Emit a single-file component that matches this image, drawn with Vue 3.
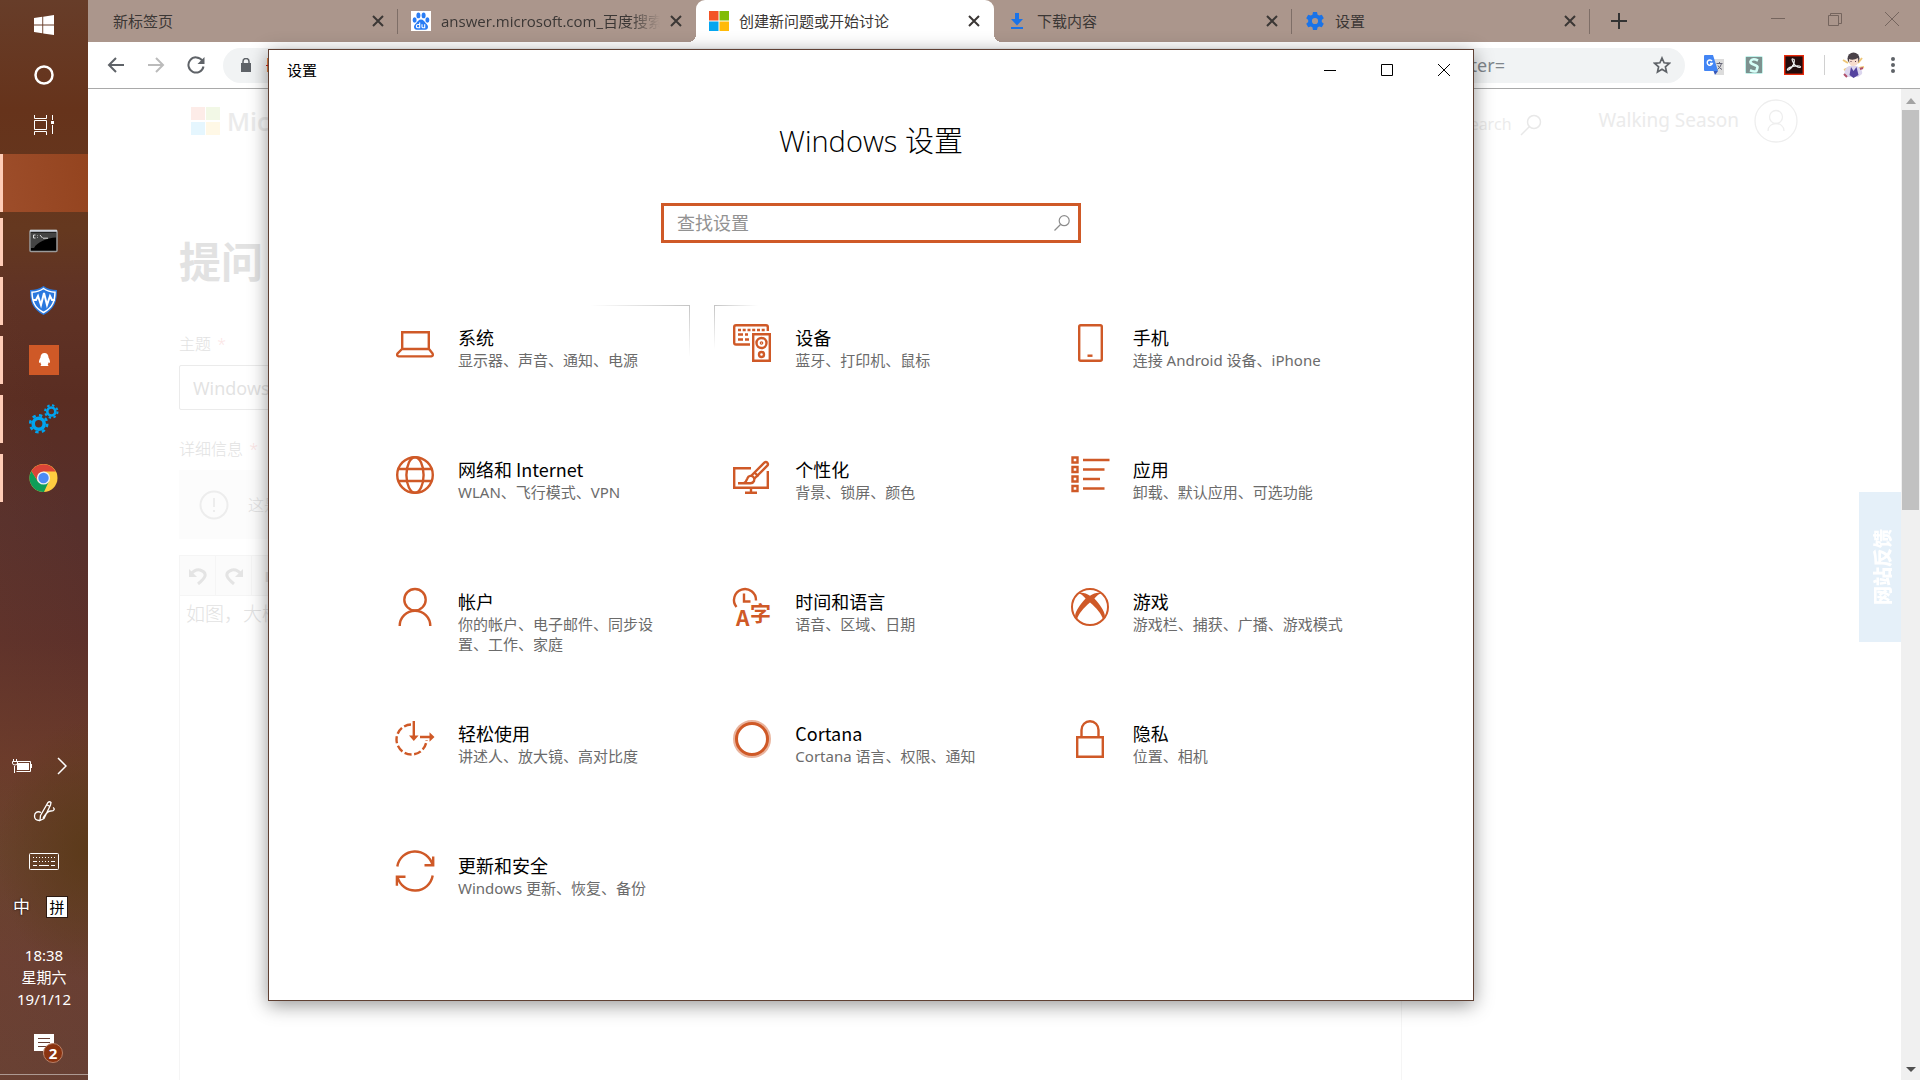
<script setup>
import { ref } from 'vue'

const query = ref('')
const subject = ref('Windows')

const tabs = [
  { title: '新标签页', icon: '' },
  { title: 'answer.microsoft.com_百度搜索', icon: 'baidu', fade: true },
  { title: '创建新问题或开始讨论', icon: 'ms', active: true },
  { title: '下载内容', icon: 'download' },
  { title: '设置', icon: 'gear' },
]

const favicons = {
  baidu:
    '<rect width="20" height="20" fill="#fff"/><g fill="#2a7df4"><ellipse cx="3.6" cy="9" rx="2" ry="2.7"/><ellipse cx="7.4" cy="4.4" rx="2" ry="2.9"/><ellipse cx="12.6" cy="4.4" rx="2" ry="2.9"/><ellipse cx="16.4" cy="9" rx="2" ry="2.7"/><path d="M10 8.600c2.400 0 3.200 2 4.800 3.600 2 1.800 2.600 3 2 4.800-.8 2.200-3 1.800-6.800 1.800s-6 .4-6.800-1.800c-.6-1.800 0-3 2-4.800C6.800 10.600 7.600 8.600 10 8.600z"/></g><path d="M8.700 11.500v5.300H7a1.500 1.500 0 0 1 0-3.300h1.700M11 13.300v2.400q0 1 1 1h1.700v-3.400" fill="none" stroke="#fff" stroke-width="1.100"/>',
  ms: '<path fill="#f35325" d="M0 0h9.500v9.500H0z"/><path fill="#81bc06" d="M10.500 0H20v9.500h-9.500z"/><path fill="#05a6f0" d="M0 10.500h9.500V20H0z"/><path fill="#ffba08" d="M10.500 10.500H20V20h-9.500z"/>',
  download: '<path fill="#1a73e8" d="M8 2h4v6h4l-6 6.500L4 8h4zM4 16h12v2H4z"/>',
  gear: '<path fill="#1a73e8" fill-rule="evenodd" d="M8 1h4l.6 2.700 1.600.9 2.600-.8 2 3.400-2 1.900v1.800l2 1.900-2 3.400-2.600-.8-1.600.9L12 19H8l-.6-2.700-1.600-.9-2.600.8-2-3.400 2-1.900V9.100l-2-1.900 2-3.400 2.600.8 1.600-.9zM10 6.900a3.100 3.100 0 1 0 0 6.200 3.100 3.100 0 0 0 0-6.200z"/>',
}

const tiles = [
  {
    title: '系统',
    text: '显示器、声音、通知、电源',
    edge: 'end',
    icon: '<path d="M6.200 25V8.200h26.600V25zM6 25l-4.600 4.600q-.9 2.600 1.300 2.800h32.600q2.200-.2 1.300-2.800L33 25"/>',
  },
  {
    title: '设备',
    text: '蓝牙、打印机、鼠标',
    edge: 'start',
    icon: '<path d="M17 20.500H3q-1.800 0-1.800-1.800V3q0-1.800 1.800-1.800h30q1.800 0 1.800 1.800v4"/><path d="M5 6h3M9.700 6h3M14.500 6h3M19.200 6h3M24 6h3M28.700 6h3M5 10.500h5M12 10.500h3M5 15.500h5M12 15.500h4"/><path d="M20.200 10.200h16.600v26.600H20.200z"/><circle cx="28.500" cy="19" r="5"/><circle cx="28.500" cy="19" r=".6"/><circle cx="28.500" cy="30.500" r="2.500"/>',
  },
  {
    title: '手机',
    text: '连接 Android 设备、iPhone',
    icon: '<rect x="8.200" y="1.200" width="22.600" height="35.600" rx="1.500"/><path d="M16.500 31.700h5"/>',
  },
  {
    title: '网络和 Internet',
    text: 'WLAN、飞行模式、VPN',
    icon: '<circle cx="19" cy="19" r="17.800"/><ellipse cx="19" cy="19" rx="8.600" ry="17.800"/><path d="M2.500 13h33M2.500 25h33"/>',
  },
  {
    title: '个性化',
    text: '背景、锁屏、颜色',
    icon: '<path d="M18 12.200H1.200v19.600h33.600V15M18 32v5M12 36.800h12"/><path d="M5 27.200h12.500c3.400 0 4.800-3.600 3.200-5.800-1.600-2.400-5.400-1.800-6.300.9-.8 2.200-1.400 3.800-3.400 4.800"/><path d="M18.500 19.500L31.300 6.700q1.600-1.400 3 0 1.300 1.400 0 3L21.500 22.500M21.500 16.500l4 4"/>',
  },
  {
    title: '应用',
    text: '卸载、默认应用、可选功能',
    icon: '<path d="M1.500 1.500h5v5h-5zM1.500 11h5v5h-5zM1.500 20.500h5v5h-5zM1.500 30h5v5h-5z"/><path d="M12 4h26.500M12 13.500h21.500M12 23h17M12 32.500h21.500"/>',
  },
  {
    title: '帐户',
    text: '你的帐户、电子邮件、同步设置、工作、家庭',
    icon: '<circle cx="19" cy="11.700" r="10.700"/><path d="M3.700 38a15.300 15.300 0 0 1 30.600 0"/>',
  },
  {
    title: '时间和语言',
    text: '语音、区域、日期',
    icon: '<path d="M3.500 19A11 11 0 1 1 23 12.500M11 5.500v8h6.500"/><g fill="#cf5927" stroke="none" font-weight="700"><text x="3" y="38" font-size="21" font-family="Noto Sans CJK SC, sans-serif">A</text><text x="17" y="33" font-size="21" font-family="Noto Sans CJK SC, sans-serif">字</text></g>',
  },
  {
    title: '游戏',
    text: '游戏栏、捕获、广播、游戏模式',
    icon: '<circle cx="19" cy="19" r="18" stroke-width="2"/><path fill="#cf5927" stroke="none" d="M7 5.200c4-1.200 8-.2 12 2.500 4-2.700 8-3.700 12-2.500-2.600.2-5 2-7.600 5.400 5.600 6 9.800 12.400 10.400 16.400.2 1.800-.6 3-1.800 4.200C30.500 26 25.500 20 19 14.500 12.500 20 7.500 26 6 31.200 4.800 30 4 28.800 4.200 27c.6-4 4.800-10.400 10.400-16.400C12 7.200 9.600 5.400 7 5.200z"/>',
  },
  {
    title: '轻松使用',
    text: '讲述人、放大镜、高对比度',
    icon: '<path stroke-dasharray="7.200 2.600" d="M15 4.500A15 15 0 1 0 30.500 20"/><path d="M17.800 1v16M24 17h10"/><path fill="#cf5927" stroke="none" d="M13 15.500h9.600L17.800 21zM33.500 12.300v9.400L38.500 17z"/>',
  },
  {
    title: 'Cortana',
    text: 'Cortana 语言、权限、通知',
    icon: '<circle cx="19" cy="19" r="17.500" stroke-width="3" opacity=".45"/><circle cx="19" cy="19" r="15.500" stroke-width="3"/>',
  },
  {
    title: '隐私',
    text: '位置、相机',
    icon: '<path d="M6.200 17.200h25.600v19.600H6.200zM10.500 17v-7a8.500 8.800 0 0 1 17 0v7"/>',
  },
  {
    title: '更新和安全',
    text: 'Windows 更新、恢复、备份',
    icon: '<path d="M1.300 14.500A18 18 0 0 1 36.500 13M36.700 23.500A18 18 0 0 1 1.500 25M28.500 13.200h8.700V4.500M9.500 24.800H.9v9"/>',
  },
]

const running = [
  {
    name: '命令提示符',
    icon: '<rect x="1" y="3.500" width="27" height="21" rx="1" fill="#000" stroke="#9a9a9a" stroke-width="1.500"/><path d="M2 5.500h25v5C18 11 8 15 5 21H2z" fill="#444"/><path d="M1 3.800h27" stroke="#cfd3dc" stroke-width="2"/><path d="M6.500 8h-2v3h2M8.500 8.500v.6M8.500 10.400v.6M11 8l2.500 3M14 11.200h5" stroke="#ddd" fill="none"/>',
  },
  {
    name: '安全卫士',
    icon: '<path d="M14.500 0C11 2.800 6 4 1 4c0 11 2 19 13.500 25C26 23 28 15 28 4c-5 0-10-1.200-13.500-4z" fill="#2a78de"/><path d="M14.500 2.500C11 5 7 6 3 6.200 3.300 15 5 21.500 14.500 26.500 24 21.500 25.700 15 26 6.200 22 6 18 5 14.500 2.500z" fill="none" stroke="#fff" stroke-width="1.500"/><path d="M4 14h3l2-4 3 9 3-12 3 12 3-9 2 4h3" fill="none" stroke="#fff" stroke-width="2"/>',
  },
  {
    name: 'QQ',
    icon: '<path d="M0 0h30v30H0z" fill="#cf5927"/><path d="M15.500 8c-2.500 0-4 1.800-4 4.500-1.200 2.200-1.700 3.700-1.500 5.500l1.300-.8q.3 1.400 1 2.100l-.8 1.700h8l-.8-1.700q.7-.7 1-2.100l1.300.8c.2-1.800-.3-3.300-1.500-5.500 0-2.700-1.500-4.500-4-4.500z" fill="#fff"/>',
  },
  {
    name: '服务',
    icon: '<g fill="none" stroke="#00a4ef"><circle cx="9.700" cy="19.800" r="5.500" stroke-width="3.600"/><circle cx="9.700" cy="19.800" r="8.500" stroke-width="2.600" stroke-dasharray="3.340 3.340"/><circle cx="22.300" cy="7.500" r="4" stroke-width="2.600"/><circle cx="22.300" cy="7.500" r="6.200" stroke-width="2" stroke-dasharray="2.430 2.430"/></g>',
  },
  {
    name: 'Chrome',
    icon: '<circle cx="14.500" cy="15" r="14" fill="#ffcd40"/><path d="M2.400 8A14 14 0 0 0 15 29l5-11-11 .5z" fill="#0f9d58"/><path d="M2.400 8L9 18.500l5.500-10H26.700A14 14 0 0 0 2.400 8z" fill="#db4437"/><circle cx="14.500" cy="15" r="6.600" fill="#f1f1f1"/><circle cx="14.500" cy="15" r="5.200" fill="#4c8bf5"/>',
  },
]
</script>

<template>
  <div class="desktop" lang="zh-CN">
    <nav class="taskbar" aria-label="任务栏">
      <button class="task" aria-label="开始">
        <svg width="20" height="20" fill="#fff"><path d="M0 3l8.300-1.200v7.700H0zM9.200 1.700L20 0v9.500H9.200zM0 10.400h8.300v7.800L0 17zM9.200 10.400H20V20l-10.800-1.600z" /></svg>
      </button>
      <button class="task" aria-label="Cortana">
        <svg width="20" height="20" fill="none"><circle cx="10" cy="10" r="8.500" stroke="#fff" stroke-width="2.500" /></svg>
      </button>
      <button class="task" aria-label="任务视图">
        <svg width="20" height="20" fill="none" stroke="#fff"><path d="M.5 0v3.500h12V0M.5 5.500h12v9H.5zM.5 20v-3.500h12V20M18.500 0v5M18.500 10v9" /><path d="M17 6h3v3h-3z" fill="#fff" stroke="none" /></svg>
      </button>
      <button class="task current" aria-label="设置"></button>
      <button v-for="app in running" :key="app.name" class="task running" :aria-label="app.name">
        <svg width="30" height="30" v-html="app.icon"></svg>
      </button>

      <div class="tray">
        <div class="pair">
          <svg width="20" height="14" fill="none" stroke="#fff"><path d="M5 2.500h13.500v10H4.500" /><path d="M5 4h12v7H5z" fill="#fff" stroke="none" /><path d="M19.500 5v4M2.500 7v7M1.500 0v2M4.500 0v2M.5 2.500h5v1.500q0 2-2.500 2T.5 4z" /></svg>
          <svg width="10" height="18" fill="none" stroke="#fff" stroke-width="1.500"><path d="M1 1l8 8-8 8" /></svg>
        </div>
        <svg class="pen" width="22" height="22" fill="none" stroke="#fff" stroke-width="1.300"><path d="M8 12.500c-4-2-6.500.5-6.500 3.500s2 4.500 5 4.500M7.500 15.500L15 2.500q1.500-1.500 3 0l-.5 2.500L11 18.500 7 20.500zM10 18c3-4 4-7 8-7 3.500 0 4-2.500 2-3.500M13.500 4.500l3 1.700" /></svg>
        <svg class="keys" width="30" height="18" fill="none" stroke="#fff"><rect x=".5" y=".5" width="29" height="16" rx="1" /><path d="M4 4.500h22" stroke-dasharray="1 2" /><path d="M4 8.500h4M10 8.500h1M13 8.500h1M16 8.500h1M19 8.500h1M22 8.500h4M4 12.500h4M10 12.500h10M22 12.500h4" /></svg>
        <div class="pair ime">
          <span class="zhong">中</span>
          <span class="pin">拼</span>
        </div>
        <div class="clock">18:38<br />星期六<br />19/1/12</div>
        <button class="notice" aria-label="通知">
          <svg width="20" height="22"><path d="M0 0h20v17h-7l-4 4v-4H0z" fill="#fff" /><path d="M4 4.500h12M4 8.500h12M4 12.500h8" stroke="#683f34" /></svg>
          <span class="count">2</span>
        </button>
      </div>
    </nav>

    <section class="browser">
      <header class="strip">
        <div class="tabs">
          <div v-for="tab in tabs" :key="tab.title" class="tab" :class="{ active: tab.active }">
            <svg v-if="tab.icon" width="20" height="20" v-html="favicons[tab.icon]"></svg>
            <span class="label" :class="{ fade: tab.fade }">{{ tab.title }}</span>
            <button class="close" aria-label="关闭标签页">
              <svg width="12" height="12" stroke="#3b3735" stroke-width="2"><path d="M1 1l10 10M11 1L1 11" /></svg>
            </button>
          </div>
          <button class="plus" aria-label="新标签页">
            <svg width="16" height="16" stroke="#333" stroke-width="2"><path d="M8 0v16M0 8h16" /></svg>
          </button>
        </div>
        <div class="controls dim">
          <button aria-label="最小化"><svg width="14" height="14" stroke="#75655e"><path d="M0 6.500h14" /></svg></button>
          <button aria-label="还原"><svg width="14" height="14" fill="none" stroke="#75655e"><path d="M.5 3.500h10v10H.5zM2.500 3.500v-2h11v10h-3" /></svg></button>
          <button aria-label="关闭"><svg width="14" height="14" stroke="#75655e"><path d="M0 0l14 14M14 0L0 14" /></svg></button>
        </div>
      </header>

      <div class="toolbar">
        <button class="nav" aria-label="后退"><svg width="18" height="16" fill="none" stroke="#5f6368" stroke-width="2"><path d="M17 8H2M9 1L2 8l7 7" /></svg></button>
        <button class="nav" aria-label="前进"><svg width="18" height="16" fill="none" stroke="#bbb" stroke-width="2"><path d="M1 8h15M9 1l7 7-7 7" /></svg></button>
        <button class="nav" aria-label="刷新"><svg width="18" height="18" fill="none" stroke="#5f6368" stroke-width="2"><path d="M15.200 4.500A7.600 7.600 0 1 0 16.500 10.500" /><path d="M17.500 1v7h-7z" fill="#5f6368" stroke="none" /></svg></button>
        <div class="omnibox">
          <svg width="10" height="14"><path d="M0 5h10v9H0z" fill="#5f6368" /><path d="M2 5.500V3.500a3 3 0 0 1 6 0v2" fill="none" stroke="#5f6368" stroke-width="1.500" /></svg>
          <s class="scheme">h</s>
          <span class="url">ter=</span>
          <svg class="star" width="18" height="18" viewBox="0 0 18 18" fill="none" stroke="#5f6368" stroke-width="1.700"><path d="M9 2l2.100 4.800 5.200.5-3.900 3.500 1.100 5.100L9 13.200l-4.500 2.700 1.100-5.100L1.700 7.300l5.200-.5z" /></svg>
        </div>
        <div class="extensions">
          <svg width="20" height="20"><path d="M8 4h12v16H12z" fill="#dcdcdc" /><path d="M0 1q0-1 1-1h8l5 16H1q-1 0-1-1z" fill="#4285f4" /><path d="M9.500 16H14l-3 4z" fill="#3556b8" /><path d="M8 6.200A2.600 2.600 0 1 0 8.300 8.500H6" fill="none" stroke="#fff" stroke-width="1.400" /><path d="M12.500 8.500h6M15.500 7v1.500M17.500 8.500q-1 4-4 6M14 10.500q1 2.500 4 4" fill="none" stroke="#667" /></svg>
          <svg width="20" height="20"><rect x="1" y="1" width="18" height="18" rx="2" fill="#bdf0e8" /><rect x="2" y="2" width="16" height="16" fill="#7d918f" /><path d="M14 5.500Q9 3 7 5.500t2.500 4 4 3-1 3.300-6.500-.6" fill="none" stroke="#d6fff8" stroke-width="2.600" /></svg>
          <svg width="20" height="20"><rect x=".7" y=".7" width="18.600" height="18.600" fill="#230b0b" stroke="#e8290b" stroke-width="1.400" /><path d="M9 4q2 0 1 4t-5.500 7q-2 .5-.5-1.500 4-3 11.500-2.500 2 1 .3 1.500Q12 12.500 9.500 8T9 4z" fill="none" stroke="#eee" stroke-width="1.200" /></svg>
        </div>
        <svg class="avatar" width="26" height="26" viewBox="0 0 26 26"><path d="M3 8l5 3M22 6l-4 5M4 18l5-2M24 15l-5 1" stroke="#efc778" stroke-width="2" /><path d="M5 23q-2-6 4-9h8q6 3 5 8l-4 3H8z" fill="#dcd6ee" /><path d="M11 15l2.500 4 3-4 2 8-5 3-4-3z" fill="#54439f" /><path d="M4 22l3 3M20 17l3-1" stroke="#b04f6b" stroke-width="2" /><circle cx="13.500" cy="6.500" r="6" fill="#4a4148" /><path d="M9 7q4 2 9-1 1.500 7-4 8T9 7z" fill="#f6dccd" /><path d="M10.500 9.500h1M15 9.500h1" stroke="#5b3a4a" /></svg>
        <button class="more" aria-label="菜单"><svg width="4" height="16" fill="#5f6368"><circle cx="2" cy="2" r="2" /><circle cx="2" cy="8" r="2" /><circle cx="2" cy="14" r="2" /></svg></button>
      </div>

      <div class="viewport">
        <main class="page">
          <div class="site">
            <svg class="logo" width="29" height="28"><path fill="#fdece8" d="M0 0h14v13H0z" /><path fill="#f2f8e6" d="M15 0h14v13H15z" /><path fill="#e5f6fe" d="M0 15h14v13H0z" /><path fill="#fff8e6" d="M15 15h14v13H15z" /></svg>
            <span class="brand">Micr</span>
            <span class="search">earch</span>
            <svg class="lens" width="22" height="22" fill="none" stroke="#e8e8e8" stroke-width="1.500"><circle cx="14" cy="8" r="6.500" /><path d="M9.500 12.500L1 21" /></svg>
            <span class="user">Walking Season</span>
            <svg width="44" height="44" fill="none" stroke="#eee" stroke-width="1.300"><circle cx="22" cy="22" r="21" /><circle cx="22" cy="18" r="6.500" /><path d="M14 32c0-10 16-10 16 0" /></svg>
          </div>

          <form class="ask" @submit.prevent>
            <h1>提问</h1>
            <label for="subject">主题 <i>*</i></label>
            <input id="subject" v-model="subject" type="text" />
            <label for="details">详细信息 <i>*</i></label>
            <div class="alert">
              <svg width="30" height="30" fill="none" stroke="#ededed" stroke-width="2"><circle cx="15" cy="15" r="13.500" /><path d="M15 8v9M15 20v2" /></svg>
              <span>这是</span>
            </div>
            <div class="editor">
              <div class="tools">
                <button type="button" aria-label="撤消"><svg width="20" height="18" fill="none" stroke="#e4e4e4" stroke-width="3"><path d="M3 7q4-5 9-4 6 2 5 6-1 3-7 8" /><path d="M1 2v8h8z" fill="#e4e4e4" stroke="none" /></svg></button>
                <button type="button" aria-label="恢复"><svg width="20" height="18" fill="none" stroke="#e4e4e4" stroke-width="3"><path d="M17 7q-4-5-9-4-6 2-5 6 1 3 7 8" /><path d="M19 2v8h-8z" fill="#e4e4e4" stroke="none" /></svg></button>
                <button type="button" aria-label="粗体"><b>B</b></button>
              </div>
              <textarea id="details">如图，大概</textarea>
            </div>
          </form>
          <a class="feedback" href="#feedback"><span>网站反馈</span></a>
        </main>
        <div class="scrollbar" aria-hidden="true">
          <svg width="10" height="6"><path d="M0 6l5-6 5 6z" fill="#a3a3a3" /></svg>
          <div class="thumb"></div>
          <svg class="down" width="10" height="6"><path d="M0 0h10L5 5z" fill="#505050" /></svg>
        </div>
      </div>
    </section>

    <section class="settings" aria-label="设置">
      <header class="titlebar">
        <span>设置</span>
        <div class="controls">
          <button aria-label="最小化"><svg width="12" height="12" stroke="#000"><path d="M0 6.500h12" /></svg></button>
          <button aria-label="最大化"><svg width="12" height="12" fill="none" stroke="#000"><path d="M.5.5h11v11H.5z" /></svg></button>
          <button aria-label="关闭"><svg width="12" height="12" stroke="#000"><path d="M0 0l12 12M12 0L0 12" /></svg></button>
        </div>
      </header>
      <h2>Windows 设置</h2>
      <div class="find">
        <input v-model="query" type="text" placeholder="查找设置" aria-label="查找设置" />
        <svg width="16" height="16" fill="none" stroke="#8c8c8c" stroke-width="1.200"><circle cx="10.200" cy="5.700" r="5" /><path d="M6.500 9.500L.5 15.500" /></svg>
      </div>
      <div class="grid">
        <a v-for="tile in tiles" :key="tile.title" class="tile" :class="tile.edge" href="#settings">
          <svg width="38" height="38" viewBox="0 0 38 38" fill="none" stroke="#cf5927" stroke-width="2.400" overflow="visible" v-html="tile.icon"></svg>
          <span class="words">
            <strong>{{ tile.title }}</strong>
            <small>{{ tile.text }}</small>
          </span>
        </a>
      </div>
    </section>
  </div>
</template>

<style>
html,
body {
  margin: 0;
  overflow: hidden;
}
</style>

<style scoped>
.desktop {
  position: relative;
  display: flex;
  height: 100vh;
  overflow: hidden;
  font-family: "Open Sans", "Noto Sans CJK SC", sans-serif;
  font-size: 15px;
  line-height: 20px;
  color: #000;
}
.desktop * {
  box-sizing: border-box;
}
button {
  margin: 0;
  padding: 0;
  border: 0;
  background: none;
  font: inherit;
  color: inherit;
  display: flex;
  align-items: center;
  justify-content: center;
}
svg {
  display: block;
  flex: none;
}

/* Taskbar */
.taskbar {
  flex: none;
  width: 88px;
  display: flex;
  flex-direction: column;
  background:
    radial-gradient(90px 130px at 88px 850px, #5c3a1a, transparent),
    linear-gradient(75deg, rgba(125, 75, 50, 0.25), transparent 60%),
    linear-gradient(#673d29 0, #66331b 110px, #65381f 230px, #603325 290px, #5a2d22 400px, #57302c 520px, #5c302a 640px, #69392a 760px, #64402b 850px, #673d33 960px, #633e34 1080px);
}
.task {
  flex: none;
  height: 50px;
}
.current {
  height: 58px;
  margin: 4px 0 1px;
  background: linear-gradient(80deg, #9d4d2a, #94441f);
  border-left: 3px solid #ffcdb7;
}
.running {
  height: 48px;
  margin: 5px 0 6px;
  padding-right: 3px;
  border-left: 3px solid #ffcdb7;
}
.tray {
  margin-top: auto;
  display: flex;
  flex-direction: column;
  align-items: center;
  color: #fff;
  border-bottom: 1px solid #ad9992;
  margin-bottom: 5px;
}
.pair {
  width: 88px;
  padding: 0 21px 0 12px;
  display: flex;
  align-items: center;
  justify-content: space-between;
}
.pen {
  margin-top: 25px;
}
.keys {
  margin-top: 31px;
}
.ime {
  margin-top: 26px;
  padding-left: 13px;
  font-size: 17px;
}
.zhong {
  text-shadow: 0 0 2px #000;
}
.pin {
  width: 20px;
  background: #fff;
  color: #000;
  font-size: 15px;
  line-height: 20px;
  text-align: center;
  outline: 1px solid #2d1a12;
}
.clock {
  margin-top: 27px;
  text-align: center;
  font-family: "Noto Sans", "Noto Sans CJK SC", sans-serif;
  line-height: 22px;
}
.notice {
  position: relative;
  margin: 24px 0 18px;
}
.count {
  position: absolute;
  left: 9px;
  top: 9px;
  width: 20px;
  height: 20px;
  border: 1px solid #b98067;
  border-radius: 50%;
  background: #8b3310;
  font-weight: 700;
  line-height: 18px;
}

/* Browser */
.browser {
  flex: 1;
  min-width: 0;
  display: flex;
  flex-direction: column;
  background: #fff;
}
.strip {
  flex: none;
  height: 42px;
  display: flex;
  justify-content: space-between;
  background: #ab968c;
}
.tabs {
  flex: 1;
  min-width: 0;
  display: flex;
  padding-left: 12px;
}
.tab {
  position: relative;
  flex: 0 1 298px;
  min-width: 0;
  display: flex;
  align-items: center;
  gap: 10px;
  padding: 0 14px 0 13px;
  color: #3b3735;
}
.tab:not(.active)::after {
  content: "";
  position: absolute;
  right: 0;
  top: 9px;
  height: 25px;
  border-right: 1px solid #7e6e67;
}
.tab:nth-child(2)::after {
  display: none;
}
.active {
  background: #fff;
  border-radius: 9px 9px 0 0;
}
.active::before,
.active::after {
  content: "";
  position: absolute;
  bottom: 0;
  width: 8px;
  height: 8px;
}
.active::before {
  left: -8px;
  background: radial-gradient(circle at 0 0, transparent 8px, #fff 8px);
}
.active::after {
  right: -8px;
  background: radial-gradient(circle at 100% 0, transparent 8px, #fff 8px);
}
.label {
  flex: 1;
  overflow: hidden;
  white-space: nowrap;
}
.fade {
  mask-image: linear-gradient(90deg, #000 86%, transparent);
}
.plus {
  width: 58px;
}
.controls {
  display: flex;
}
.controls button {
  width: 57px;
}
.dim button {
  height: 37px;
}
.toolbar {
  flex: none;
  height: 47px;
  display: flex;
  align-items: center;
  padding: 0 13px 0 8px;
  border-bottom: 1px solid #a9a9a9;
}
.nav {
  width: 40px;
  height: 40px;
}
.omnibox {
  flex: 1;
  min-width: 0;
  height: 35px;
  margin: 0 19px 0 7px;
  padding: 0 14px 0 18px;
  display: flex;
  align-items: center;
  border-radius: 18px;
  background: #f1f3f4;
  font-family: "Noto Sans", "Noto Sans CJK SC", sans-serif;
  font-size: 18px;
  color: #80868b;
}
.scheme {
  margin-left: 15px;
  color: #c5221f;
}
.url {
  margin-left: auto;
}
.star {
  margin-left: 148px;
}
.extensions {
  display: flex;
  gap: 20px;
  padding-right: 20px;
  border-right: 1px solid #d0d0d0;
}
.avatar {
  margin: 0 13px 0 15px;
}
.more {
  width: 28px;
  height: 28px;
}
.viewport {
  flex: 1;
  min-height: 0;
  display: flex;
}

/* Page */
.page {
  position: relative;
  flex: 1;
  min-width: 0;
  display: flex;
  flex-direction: column;
  overflow: hidden;
}
.site {
  flex: none;
  height: 64px;
  display: flex;
  align-items: center;
  padding: 0 103px;
  color: #ebebeb;
}
.brand {
  margin-left: 7px;
  font-size: 25px;
  font-weight: 600;
}
.search {
  margin: 6px 8px 0 auto;
  font-size: 16px;
}
.lens {
  margin: 8px 57px 0 0;
}
.user {
  margin: 0 15px 2px 0;
  font-family: "Noto Sans", "Noto Sans CJK SC", sans-serif;
  font-size: 19px;
}
.ask {
  flex: 1;
  display: flex;
  flex-direction: column;
  max-width: 1223px;
  margin: 0 20px 0 91px;
  color: #e2e2e2;
}
.ask h1 {
  margin: 79px 0 40px;
  font-size: 42px;
  line-height: 60px;
  font-weight: 700;
}
.ask label {
  font-size: 16px;
  font-weight: 300;
  line-height: 24px;
}
.ask label i {
  margin-left: 2px;
  color: #fbe4e4;
  font-style: normal;
}
.ask input {
  height: 45px;
  margin: 9px 0 27px;
  padding: 0 13px;
  border: 1px solid #ebebeb;
  border-radius: 2px;
  font: inherit;
  font-size: 18px;
  color: inherit;
}
.alert {
  height: 69px;
  margin: 9px 0 16px;
  padding: 0 20px;
  display: flex;
  align-items: center;
  gap: 19px;
  background: #fcfcfc;
  font-size: 16px;
  font-weight: 300;
}
.editor {
  flex: 1;
  display: flex;
  flex-direction: column;
  border: 1px solid #f5f5f5;
  border-bottom: 0;
}
.tools {
  display: flex;
  height: 40px;
  background: #fbfbfb;
  border-bottom: 1px solid #f5f5f5;
}
.tools button {
  width: 36px;
  border-right: 1px solid #f5f5f5;
}
.editor textarea {
  flex: 1;
  padding: 4px 6px;
  border: 0;
  resize: none;
  font: inherit;
  font-size: 19px;
  font-weight: 300;
  line-height: 28px;
  color: inherit;
  background: none;
}
.feedback {
  position: absolute;
  right: 0;
  top: 403px;
  width: 42px;
  height: 150px;
  display: flex;
  align-items: center;
  justify-content: center;
  padding-left: 5px;
  background: #e5f0f9;
  color: #fff;
  font-size: 19px;
  font-weight: 900;
  text-decoration: none;
}
.feedback span {
  writing-mode: vertical-rl;
  text-orientation: sideways;
  transform: rotate(180deg);
}
.scrollbar {
  flex: none;
  width: 19px;
  display: flex;
  flex-direction: column;
  align-items: center;
  padding: 9px 1px 7px;
  background: #f0f0f0;
}
.thumb {
  width: 17px;
  height: 41%;
  margin-top: 6px;
  background: #c1c1c1;
}
.down {
  margin-top: auto;
}

/* Settings window */
.settings {
  position: absolute;
  left: 268px;
  right: 446px;
  top: 49px;
  padding-bottom: 59px;
  background: #fff;
  border: 1px solid #5f4033;
  box-shadow: 0 4px 18px rgba(0, 0, 0, 0.42);
}
.titlebar {
  height: 40px;
  display: flex;
  align-items: center;
  justify-content: space-between;
  padding: 0 1px 0 18px;
}
.titlebar .controls {
  align-self: stretch;
}
.settings h2 {
  margin: 31px 0 42px;
  font-size: 29px;
  line-height: 40px;
  font-weight: 300;
  text-align: center;
}
.find {
  width: 420px;
  max-width: 90%;
  height: 40px;
  margin: 0 auto 62px;
  padding: 0 8px 0 13px;
  display: flex;
  align-items: center;
  border: 3px solid #cf5927;
}
.find input {
  flex: 1;
  min-width: 0;
  padding: 0;
  border: 0;
  outline: 0;
  font: inherit;
  font-size: 18px;
}
.find input::placeholder {
  color: #929292;
}
.grid {
  display: grid;
  grid-template-columns: repeat(3, 1fr);
  grid-auto-rows: 108px;
  gap: 24px;
  padding: 0 108px;
}
.tile {
  position: relative;
  display: flex;
  gap: 24px;
  padding: 19px 18px 0 19px;
  color: #000;
  text-decoration: none;
}
.words {
  min-width: 0;
  display: flex;
  flex-direction: column;
}
.words strong {
  font-family: "Noto Sans CJK SC", sans-serif;
  font-size: 18px;
  line-height: 26px;
  font-weight: 400;
}
.words small {
  font-family: "Noto Sans", "Noto Sans CJK SC", sans-serif;
  font-size: 15px;
  line-height: 20px;
  color: #6b6b6b;
}
.end::before,
.end::after,
.start::before,
.start::after {
  content: "";
  position: absolute;
  top: 0;
}
.end::before {
  right: 0;
  width: 100px;
  height: 1px;
  background: linear-gradient(270deg, #c4c4c4, transparent);
}
.end::after {
  right: 0;
  width: 1px;
  height: 52px;
  background: linear-gradient(#c4c4c4, transparent);
}
.start::before {
  left: 0;
  width: 44px;
  height: 1px;
  background: linear-gradient(90deg, #c4c4c4, transparent);
}
.start::after {
  left: 0;
  width: 1px;
  height: 44px;
  background: linear-gradient(#c4c4c4, transparent);
}
</style>
